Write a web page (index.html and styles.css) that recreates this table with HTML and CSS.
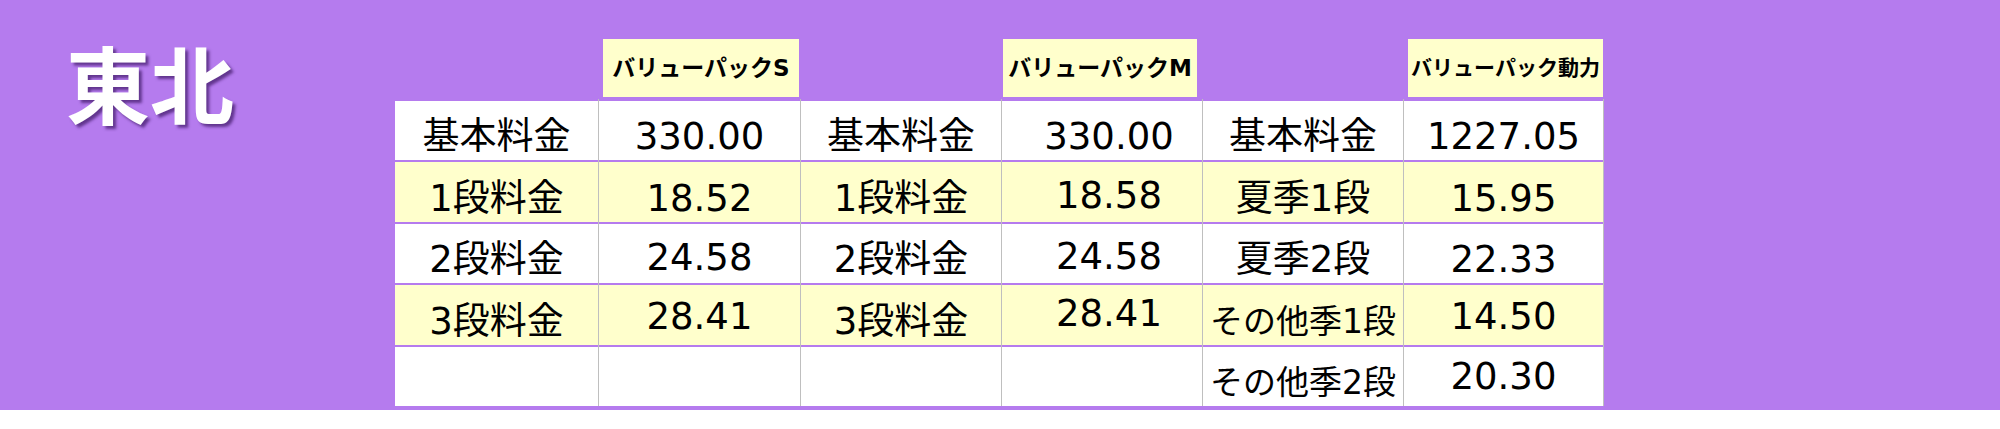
FILE: index.html
```html
<!DOCTYPE html>
<html lang="ja">
<head>
<meta charset="utf-8">
<title>東北</title>
<link rel="stylesheet" href="styles.css">
</head>
<body>
<div class="board">
  <h1 class="region">東北</h1>
  <div class="tariff">
    <div class="head-row">
      <div class="blank"></div>
      <div class="plan h-s">バリューパックS</div>
      <div class="blank"></div>
      <div class="plan h-m">バリューパックM</div>
      <div class="blank"></div>
      <div class="plan h-d small">バリューパック動力</div>
    </div>
    <div class="row white">
      <div class="cell first">基本料金</div>
      <div class="cell">330.00</div>
      <div class="cell">基本料金</div>
      <div class="cell shift">330.00</div>
      <div class="cell">基本料金</div>
      <div class="cell last">1227.05</div>
    </div>
    <div class="row yellow">
      <div class="cell first">1段料金</div>
      <div class="cell">18.52</div>
      <div class="cell">1段料金</div>
      <div class="cell shift lift-3">18.58</div>
      <div class="cell">夏季1段</div>
      <div class="cell last">15.95</div>
    </div>
    <div class="row white">
      <div class="cell first">2段料金</div>
      <div class="cell lift-2">24.58</div>
      <div class="cell">2段料金</div>
      <div class="cell shift lift-3">24.58</div>
      <div class="cell">夏季2段</div>
      <div class="cell last">22.33</div>
    </div>
    <div class="row yellow">
      <div class="cell first">3段料金</div>
      <div class="cell lift-5">28.41</div>
      <div class="cell">3段料金</div>
      <div class="cell shift lift-8">28.41</div>
      <div class="cell compact">その他季1段</div>
      <div class="cell last lift-5">14.50</div>
    </div>
    <div class="row white">
      <div class="cell first"></div>
      <div class="cell"></div>
      <div class="cell"></div>
      <div class="cell"></div>
      <div class="cell compact">その他季2段</div>
      <div class="cell last lift-6">20.30</div>
    </div>
  </div>
</div>
</body>
</html>
```
FILE: styles.css
```css
html, body {
  margin: 0;
  padding: 0;
  background: #ffffff;
}

body {
  font-family: "DejaVu Sans", "Noto Sans CJK JP", sans-serif;
  color: #000000;
}

.board {
  height: 410px;
  background: #b57bee;
  display: flex;
  align-items: flex-start;
}

.region {
  box-sizing: border-box;
  width: 395px;
  margin: 0;
  padding: 40px 0 0 66px;
  font-family: "Noto Sans CJK JP", sans-serif;
  font-weight: 700;
  font-size: 84px;
  line-height: 1;
  color: #ffffff;
  text-shadow: 3px 3px 3px rgba(70, 30, 110, 0.75);
}

.tariff {
  margin-top: 39px;
}

.head-row,
.row {
  display: grid;
  grid-template-columns: 203px 202px 201px 201px 201px 201px;
}

.head-row {
  height: 58px;
  margin-bottom: 2px;
}

.plan {
  background: #ffffcc;
  display: flex;
  align-items: center;
  justify-content: center;
  padding-bottom: 4px;
  box-sizing: border-box;
  font-weight: 700;
  font-size: 23px;
  white-space: nowrap;
}

.plan.small {
  font-size: 21px;
}

.h-s { margin: 0 1px 0 5px; }
.h-m { margin: 0 5px 0 2px; }
.h-d { margin: 0 1px 0 5px; }

.row {
  height: 61.4px;
}

.white .cell { background: #ffffff; }
.yellow .cell { background: #ffffcc; }

.cell {
  box-sizing: border-box;
  border-left: 1px solid #bfbfbf;
  box-shadow: inset 0 2px 0 #b57bee;
  display: flex;
  align-items: flex-end;
  justify-content: center;
  padding-bottom: 3px;
  font-size: 37px;
  line-height: 40px;
  white-space: nowrap;
}

.cell.first {
  border-left: none;
}

.cell.last {
  border-right: 1px solid #bfbfbf;
}

.cell.compact {
  font-size: 33px;
}

.cell.shift {
  padding-left: 14px;
}

.cell.lift-2 { padding-bottom: 5px; }
.cell.lift-3 { padding-bottom: 6px; }
.cell.lift-5 { padding-bottom: 8px; }
.cell.lift-6 { padding-bottom: 9px; }
.cell.lift-8 { padding-bottom: 11px; }
```
